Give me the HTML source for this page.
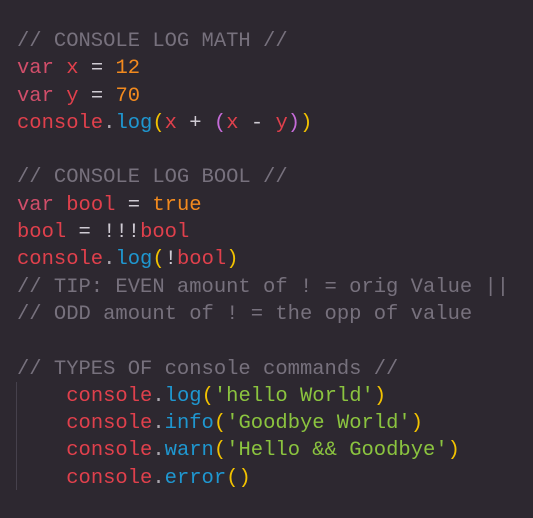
<!DOCTYPE html>
<html><head><meta charset="utf-8"><style>
html,body{margin:0;padding:0;background:#2d2830;width:533px;height:518px;overflow:hidden}
pre{margin:0;position:absolute;left:17px;top:28px;font-family:"Liberation Mono",monospace;font-size:20.5px;line-height:27.3px;color:#e8e6ea}
.c{color:#77717d}.k{color:#d14e6a}.r{color:#e0404c}.n{color:#f28a1e}.b{color:#1f97d0}.y{color:#f2c200}.p{color:#c56bd8}.g{color:#8bc43f}.w{color:#cfcbd3}.d{color:#aaa6ae}
.guide{position:absolute;left:16px;top:382px;width:1px;height:108px;background:#46414c}
</style></head><body>
<div class="guide"></div>
<pre><span class="c">// CONSOLE LOG MATH //</span>
<span class="k">var</span> <span class="r">x</span> <span class="w">=</span> <span class="n">12</span>
<span class="k">var</span> <span class="r">y</span> <span class="w">=</span> <span class="n">70</span>
<span class="r">console</span><span class="d">.</span><span class="b">log</span><span class="y">(</span><span class="r">x</span> <span class="w">+</span> <span class="p">(</span><span class="r">x</span> <span class="w">-</span> <span class="r">y</span><span class="p">)</span><span class="y">)</span>

<span class="c">// CONSOLE LOG BOOL //</span>
<span class="k">var</span> <span class="r">bool</span> <span class="w">=</span> <span class="n">true</span>
<span class="r">bool</span> <span class="w">=</span> <span class="w">!!!</span><span class="r">bool</span>
<span class="r">console</span><span class="d">.</span><span class="b">log</span><span class="y">(</span><span class="w">!</span><span class="r">bool</span><span class="y">)</span>
<span class="c">// TIP: EVEN amount of ! = orig Value ||</span>
<span class="c">// ODD amount of ! = the opp of value</span>

<span class="c">// TYPES OF console commands //</span>
    <span class="r">console</span><span class="d">.</span><span class="b">log</span><span class="y">(</span><span class="g">'hello World'</span><span class="y">)</span>
    <span class="r">console</span><span class="d">.</span><span class="b">info</span><span class="y">(</span><span class="g">'Goodbye World'</span><span class="y">)</span>
    <span class="r">console</span><span class="d">.</span><span class="b">warn</span><span class="y">(</span><span class="g">'Hello &amp;&amp; Goodbye'</span><span class="y">)</span>
    <span class="r">console</span><span class="d">.</span><span class="b">error</span><span class="y">()</span></pre>
</body></html>
